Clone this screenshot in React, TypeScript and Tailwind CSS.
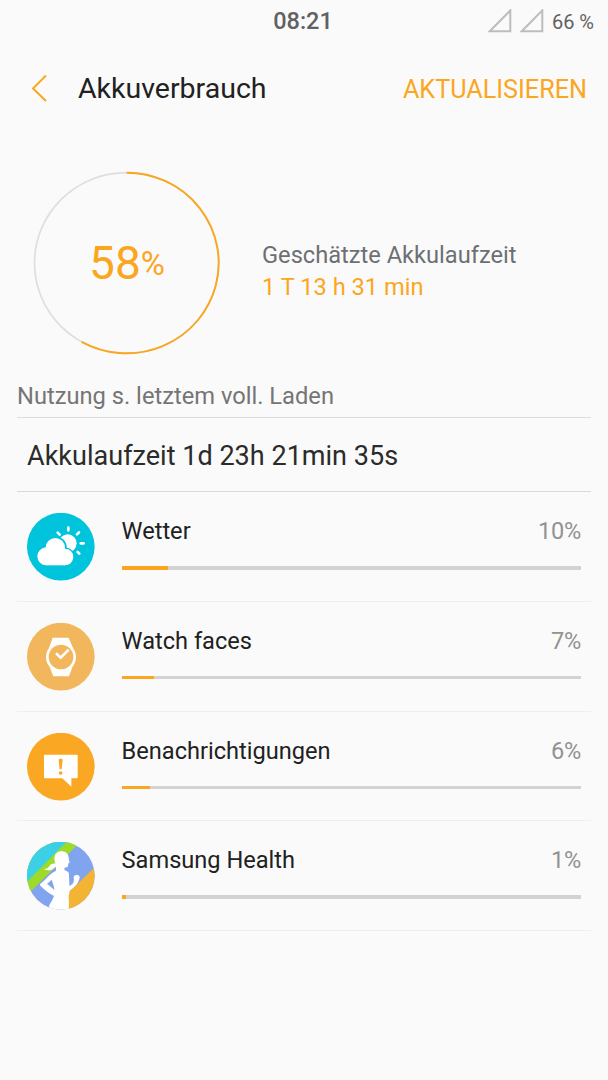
import React from "react";

interface AppUsage {
  name: string;
  percent: number;
  barWidth: number;
  icon: React.ReactNode;
}

const WeatherIcon = () => (
  <svg viewBox="0 0 204 204" className="h-[68px] w-[68px] shrink-0">
    <circle cx="101.5" cy="101" r="101.5" fill="#00c3dc" />
    <circle cx="122" cy="91" r="27" fill="#fff" />
    <g stroke="#fff" strokeWidth="8" strokeLinecap="round">
      <path d="M124 44v8M156 58l-6 6M161 91h9M152 117l5 5M92 59l6 6" />
    </g>
    <g fill="#00c3dc" stroke="#00c3dc" strokeWidth="11">
      <circle cx="85" cy="104" r="29" />
      <circle cx="115" cy="133" r="24" />
    </g>
    <g fill="#fff">
      <circle cx="85" cy="104" r="29" />
      <circle cx="58" cy="130" r="27" />
      <circle cx="114" cy="132" r="25" />
      <path d="M58 110h56v47H58z" />
    </g>
  </svg>
);

const WatchIcon = () => (
  <svg viewBox="0 0 204 204" className="h-[68px] w-[68px] shrink-0">
    <circle cx="101.5" cy="101" r="101.5" fill="#f2b75d" />
    <path d="M77 44h48l13 31v52l-12 33H79l-13-33V75z" fill="#fff" />
    <circle cx="102" cy="102" r="45" fill="#fff" />
    <circle cx="102" cy="102" r="37" fill="#f2b75d" />
    <path d="M87 91l14 13 24-24" fill="none" stroke="#fff" strokeWidth="8" />
  </svg>
);

const NotificationIcon = () => (
  <svg viewBox="0 0 204 204" className="h-[68px] w-[68px] shrink-0">
    <circle cx="101.5" cy="101" r="101.5" fill="#faa824" />
    <path
      d="M54 65h95q3 0 3 3v65q0 3-3 3h-16v25l-27-25H54q-3 0-3-3V68q0-3 3-3z"
      fill="#fff"
    />
    <path d="M95 81q0-4 6-4t6 4l-3 28h-6z" fill="#faa824" />
    <circle cx="101" cy="120" r="5.5" fill="#faa824" />
  </svg>
);

const HealthIcon = () => (
  <svg viewBox="0 0 204 204" className="h-[68px] w-[68px] shrink-0">
    <clipPath id="health-clip">
      <circle cx="101.5" cy="101" r="101.5" />
    </clipPath>
    <g clipPath="url(#health-clip)">
      <path d="M0 0h204v204H0z" fill="#80a4ee" />
      <path d="M0 0h150v10L0 160z" fill="#9edb28" />
      <path d="M0 0h118L0 119z" fill="#3bd0e5" />
      <path d="M204 75v129h-84v-48z" fill="#f3b333" />
      {/* Runner */}
      <path
        fill="#fff"
        d="M84 61C79 44 85 28 103 28c14 0 21 8 22 19l1 7 2 8-4 2-1 9c-1 3-5 4-11 4l1 8c9 3 14 6 13 15l1 24c1 5 0 7 1 9l11-10 2-12c-3-9 1-12 9-12 8 0 9 7 7 13l-5 11c-7 10-12 14-24 24l-3 15c0 12 2 24 0 42H64c1-12 4-18 10-26l7-16c-14-8-29-18-41-31-2-4 0-6 3-8 16-12 24-27 42-35 3-3 3-10 1-14-9 9-20 15-36 8 8-1 12-3 16-8 5-7 10-10 19-9z"
      />
      <path d="M60 126l14-13c2 9 8 18 8 32-6-7-14-14-22-19z" fill="#80a4ee" />
    </g>
  </svg>
);

const apps: AppUsage[] = [
  { name: "Wetter", percent: 10, barWidth: 46, icon: <WeatherIcon /> },
  { name: "Watch faces", percent: 7, barWidth: 32.5, icon: <WatchIcon /> },
  { name: "Benachrichtigungen", percent: 6, barWidth: 28, icon: <NotificationIcon /> },
  { name: "Samsung Health", percent: 1, barWidth: 4.5, icon: <HealthIcon /> },
];

const SignalIcon = () => (
  <svg viewBox="0 0 24 24" className="h-6 w-6">
    <path d="M22.3 1.4v20.8H1.8z" fill="none" stroke="#bdbdbd" strokeWidth="2" />
  </svg>
);

const StatusBar = () => (
  <div className="grid h-[43px] grid-cols-[1fr_auto_1fr] items-center pr-[14px]">
    <div />
    <div className="pl-[12px] text-[23.5px] font-medium text-[#616161]">08:21</div>
    <div className="flex items-center justify-end gap-2">
      <div className="mt-[-1px] flex gap-2">
        <SignalIcon />
        <SignalIcon />
      </div>
      <span className="text-[20px] whitespace-nowrap text-[#616161]">66 %</span>
    </div>
  </div>
);

const Header = () => (
  <header className="flex h-[90px] items-center pr-[21px] pl-[31px]">
    <svg viewBox="0 0 16 28" className="h-7 w-4">
      <path d="M15 1.5L2 14.5l13 12.5" fill="none" stroke="#faa61e" strokeWidth="2" />
    </svg>
    <h1 className="mt-0.5 ml-[31px] text-[28.5px] text-[#212121]">Akkuverbrauch</h1>
    <button className="mt-[3px] ml-auto text-[25.2px] text-[#faa61e]">AKTUALISIEREN</button>
  </header>
);

const BatteryGauge = ({ value }: { value: number }) => (
  <div className="grid h-[184px] w-[188px] place-items-center">
    <svg viewBox="0 0 188 184" className="col-start-1 row-start-1 h-full w-full">
      <ellipse cx="93.6" cy="92" rx="92.1" ry="90.3" fill="none" stroke="#dedede" strokeWidth="1.7" />
      <path
        d="M93.6 1.7A92.1 90.3 0 1 1 48.6 170.8"
        fill="none"
        stroke="#faa61e"
        strokeWidth="1.9"
      />
    </svg>
    <div className="col-start-1 row-start-1 flex items-start text-[#faa61e]">
      <span className="text-[46px] leading-[56px]">{value}</span>
      <span className="mt-[6px] text-[33px] leading-[46px]">%</span>
    </div>
  </div>
);

const UsageRow = ({ app }: { app: AppUsage }) => (
  <li className="flex h-[109.75px] border-b border-[#eeeeee] pt-[21px] pr-[10px] pl-[10px]">
    {app.icon}
    <div className="ml-[26.6px] flex-1">
      <div className="flex justify-between leading-[36px]">
        <span className="text-[23.6px] text-[#212121]">{app.name}</span>
        <span className="text-[23.6px] tracking-[-0.3px] text-[#929292]">{app.percent}%</span>
      </div>
      <div className="mt-[17px] h-[3.5px] bg-[#d3d3d3]">
        <div className="h-full bg-[#faa61e]" style={{ width: app.barWidth }} />
      </div>
    </div>
  </li>
);

export default function App() {
  return (
    <div className="h-[1080px] w-[608px] overflow-hidden bg-[#fafafa] font-['Roboto',sans-serif]">
      <StatusBar />
      <Header />

      <section className="mt-[38px] flex items-center pl-[33px]">
        <BatteryGauge value={58} />
        <div className="mt-4 ml-[41px] text-[23.65px] leading-8">
          <p className="text-[#6d7073]">Geschätzte Akkulaufzeit</p>
          <p className="text-[#faa61e]">1 T 13 h 31 min</p>
        </div>
      </section>

      <main className="mx-[17px]">
        <h2 className="h-[63px] border-b border-[#dcdcdc] pt-[23px] text-[23.7px] leading-[36px] text-[#757575]">
          Nutzung s. letztem voll. Laden
        </h2>
        <div className="h-[74px] border-b border-[#d8d8d8] pl-[10px] text-[27.05px] leading-[76px] text-[#2b2b2b]">
          Akkulaufzeit 1d 23h 21min 35s
        </div>
        <ul>
          {apps.map((app) => (
            <UsageRow key={app.name} app={app} />
          ))}
        </ul>
      </main>
    </div>
  );
}
